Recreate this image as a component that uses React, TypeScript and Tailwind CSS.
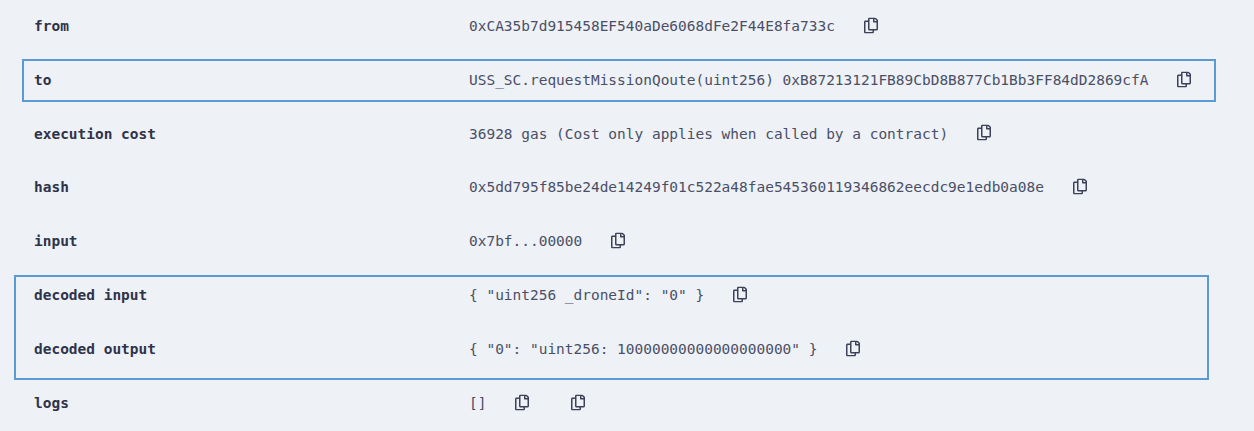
import { FaRegCopy } from "react-icons/fa";

const rows = [
  { label: "from", value: "0xCA35b7d915458EF540aDe6068dFe2F44E8fa733c" },
  { label: "to", value: "USS_SC.requestMissionQoute(uint256) 0xB87213121FB89CbD8B877Cb1Bb3FF84dD2869cfA" },
  { label: "execution cost", value: "36928 gas (Cost only applies when called by a contract)" },
  { label: "hash", value: "0x5dd795f85be24de14249f01c522a48fae545360119346862eecdc9e1edb0a08e" },
  { label: "input", value: "0x7bf...00000" },
  { label: "decoded input", value: '{ "uint256 _droneId": "0" }' },
  { label: "decoded output", value: '{ "0": "uint256: 10000000000000000000" }' },
  { label: "logs", value: "[]", extra: true },
];

const CopyIcon = () => <FaRegCopy className="w-[14px] h-[16px] shrink-0 text-[#3d4259] -translate-y-[1.5px]" />;

export default function App() {
  return (
    <div className="relative h-[431px] w-full overflow-hidden bg-[#eef1f6] pt-[0.7px] font-['DejaVu_Sans_Mono',monospace] text-[14.48px]">
      <div className="flex flex-col gap-[1.86px] pl-[34px]">
        {rows.map((row) => (
          <div key={row.label} className="flex h-[52px] items-center">
            <div className="w-[435px] font-bold text-[#2f3349]">{row.label}</div>
            <div className="flex items-center gap-[29px] text-[#4a4f66]">
              <span className="whitespace-pre">{row.value}</span>
              <CopyIcon />
              {row.extra && <span className="ml-[13px]"><CopyIcon /></span>}
            </div>
          </div>
        ))}
      </div>
      {/* annotation boxes */}
      <div className="pointer-events-none absolute left-[22px] top-[59px] h-[43px] w-[1194px] border-2 border-[#5b9bd5]" />
      <div className="pointer-events-none absolute left-[14px] top-[275px] h-[105px] w-[1195px] border-2 border-[#5b9bd5]" />
    </div>
  );
}
